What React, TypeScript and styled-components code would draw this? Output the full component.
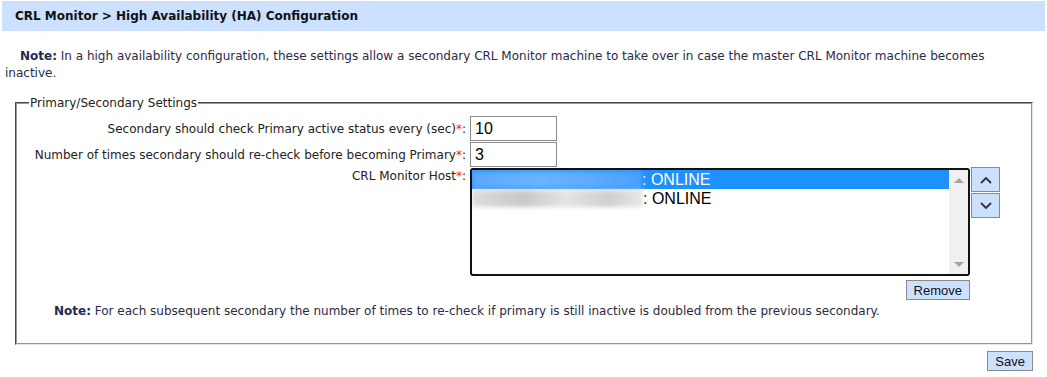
import styled, { createGlobalStyle } from "styled-components";

const GlobalStyle = createGlobalStyle`
  body {
    margin: 0;
    background: #fff;
    font-family: "DejaVu Sans", Verdana, sans-serif;
    font-size: 12px;
    color: #222;
  }
`;

const hosts = [
  { id: "a", status: "ONLINE", selected: true, blurWidth: 170 },
  { id: "b", status: "ONLINE", selected: false, blurWidth: 171 },
];

export default function App() {
  return (
    <Page>
      <GlobalStyle />
      <Header>CRL Monitor &gt; High Availability (HA) Configuration</Header>
      <Note>
        <b>Note:</b> In a high availability configuration, these settings allow a
        secondary CRL Monitor machine to take over in case the master CRL Monitor
        machine becomes inactive.
      </Note>
      <Settings>
        <Legend>Primary/Secondary Settings</Legend>
        <FormGrid>
          <Label>
            Secondary should check Primary active status every (sec)<Req>*</Req>:
          </Label>
          <TextInput defaultValue="10" />
          <Label>
            Number of times secondary should re-check before becoming Primary
            <Req>*</Req>:
          </Label>
          <TextInput defaultValue="3" />
          <Label $top>
            CRL Monitor Host<Req>*</Req>:
          </Label>
          <HostCell>
            <HostColumn>
              <ListBox>
                <Options>
                  {hosts.map((h) => (
                    <Option key={h.id} $selected={h.selected}>
                      <Blurred $selected={h.selected} style={{ width: h.blurWidth }} />
                      <span>: {h.status}</span>
                    </Option>
                  ))}
                </Options>
                <Scrollbar>
                  <Arrow $dir="up" />
                  <Arrow $dir="down" />
                </Scrollbar>
              </ListBox>
              <Button>Remove</Button>
            </HostColumn>
            <MoveButtons>
              <MoveButton aria-label="Move up">
                <svg width="14" height="10" viewBox="0 0 14 10">
                  <path d="M2 8 L7 3 L12 8" fill="none" stroke="#333" strokeWidth="1.8" />
                </svg>
              </MoveButton>
              <MoveButton aria-label="Move down">
                <svg width="14" height="10" viewBox="0 0 14 10">
                  <path d="M2 2 L7 7 L12 2" fill="none" stroke="#333" strokeWidth="1.8" />
                </svg>
              </MoveButton>
            </MoveButtons>
          </HostCell>
        </FormGrid>
        <SubNote>
          <b>Note:</b> For each subsequent secondary the number of times to re-check
          if primary is still inactive is doubled from the previous secondary.
        </SubNote>
      </Settings>
      <Footer>
        <Button>Save</Button>
      </Footer>
    </Page>
  );
}

const Page = styled.div`
  width: 1047px;
  padding-top: 1px;
`;

const Header = styled.div`
  margin: 0 2px;
  height: 30px;
  line-height: 31px;
  padding-left: 13px;
  background: #cce0ff;
  font-weight: bold;
  color: #111;
`;

const Note = styled.p`
  margin: 17px 0 0;
  padding: 0 40px 0 5px;
  text-indent: 15px;
  line-height: 17px;
  color: #2a2a4a;

  b {
    color: #1c2a55;
  }
`;

const Settings = styled.fieldset`
  margin: 14px 14px 0 15px;
  padding: 6px 0 0;
  border: 2px groove #e8e8e8;
  border-left-color: #999;
  border-top-color: #999;
  min-width: 0;
`;

const Legend = styled.legend`
  margin-left: 12px;
  padding: 0 1px;
  color: #222;
`;

const FormGrid = styled.div`
  display: grid;
  grid-template-columns: 449px auto;
  column-gap: 4px;
  row-gap: 1px;
  align-items: center;
`;

const Label = styled.label<{ $top?: boolean }>`
  text-align: right;
  white-space: nowrap;
  align-self: ${(p) => (p.$top ? "start" : "center")};
  padding-top: ${(p) => (p.$top ? "1px" : "0")};
`;

const Req = styled.span`
  color: #ff2020;
`;

const TextInput = styled.input`
  box-sizing: border-box;
  width: 87px;
  height: 25px;
  padding: 0 4px;
  border: 1px solid #8a8a8a;
  font-family: "Liberation Sans", Arial, sans-serif;
  font-size: 16px;
  color: #000;
`;

const HostCell = styled.div`
  display: flex;
  align-items: flex-start;
  gap: 1px;
`;

const HostColumn = styled.div`
  display: flex;
  flex-direction: column;
  align-items: flex-end;
  gap: 4px;
`;

const ListBox = styled.div`
  box-sizing: border-box;
  width: 500px;
  height: 108px;
  border: 2px solid #111;
  border-radius: 3px;
  display: flex;
  overflow: hidden;
`;

const Options = styled.div`
  flex: 1;
  font-family: "Liberation Sans", Arial, sans-serif;
  font-size: 16px;
`;

const Option = styled.div<{ $selected: boolean }>`
  display: flex;
  align-items: center;
  height: 19px;
  color: ${(p) => (p.$selected ? "#fff" : "#000")};
  background: ${(p) => (p.$selected ? "#1e90ff" : "transparent")};
`;

const Blurred = styled.span<{ $selected: boolean }>`
  display: inline-block;
  height: 17px;
  background: ${(p) =>
    p.$selected
      ? "linear-gradient(90deg, #5aa8ff, #6ab4ff 40%, #5eaaff 70%, #4aa0ff)"
      : "linear-gradient(90deg, #ddd, #c8c8c8 30%, #e4e4e4 55%, #cfcfcf 80%, #e8e8e8)"};
  filter: blur(2px);
`;

const Scrollbar = styled.div`
  width: 19px;
  background: #f0f0f0;
  display: flex;
  flex-direction: column;
  justify-content: space-between;
  align-items: center;
  padding: 8px 0 7px;
`;

const Arrow = styled.span<{ $dir: "up" | "down" }>`
  width: 0;
  height: 0;
  border-left: 5px solid transparent;
  border-right: 5px solid transparent;
  ${(p) =>
    p.$dir === "up"
      ? "border-bottom: 5px solid #a3a3a3;"
      : "border-top: 5px solid #a3a3a3;"}
`;

const MoveButtons = styled.div`
  display: flex;
  flex-direction: column;
  gap: 1px;
  margin-top: -1px;
`;

const MoveButton = styled.button`
  box-sizing: border-box;
  width: 29px;
  height: 25px;
  padding: 0;
  display: flex;
  align-items: center;
  justify-content: center;
  background: #cce0ff;
  border: 1px solid #8a8a8a;
`;

const Button = styled.button`
  box-sizing: border-box;
  height: 20px;
  padding: 0 7px;
  background: #cce0ff;
  border: 1px solid #8a8a8a;
  font-family: "Liberation Sans", Arial, sans-serif;
  font-size: 13px;
  color: #111;
`;

const SubNote = styled.p`
  margin: 3px 0 23px 37px;
  line-height: 17px;
  color: #2a2a4a;

  b {
    color: #1c2a55;
  }
`;

const Footer = styled.div`
  display: flex;
  justify-content: flex-end;
  margin: 6px 14px 0 0;
`;
